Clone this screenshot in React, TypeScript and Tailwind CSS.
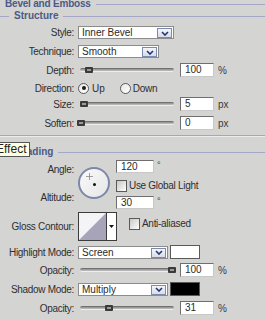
import React from "react";

const font = { fontFamily: '"Liberation Sans", Arial, sans-serif' };

function DropBtn() {
  return (
    <div className="absolute right-[1px] top-[1px] w-[15px] h-[10px] border border-[#7b8bb0] bg-gradient-to-b from-[#f4f6fb] to-[#d6dcea] flex items-center justify-center">
      <svg width="8" height="5" viewBox="0 0 8 5">
        <path d="M1 1 L4 4 L7 1" stroke="#27356a" strokeWidth="1.6" fill="none" />
      </svg>
    </div>
  );
}

function Select({ w, text }: { w: string; text: string }) {
  return (
    <div className={`relative h-[13px] ${w} border border-[#8c8c8c] bg-white`}>
      <span className="absolute left-[3px] top-[0px] leading-[11px] text-[10px] text-[#2b2b2b]">{text}</span>
      <DropBtn />
    </div>
  );
}

function Input({ v }: { v: string }) {
  return (
    <div className="w-[34px] h-[14px] border border-[#6e6e6e] border-r-[#c8c8c8] border-b-[#c8c8c8] bg-white pl-[4px] leading-[12px] text-[10px] text-[#2b2b2b]">
      {v}
    </div>
  );
}

function Slider({ thumb }: { thumb: number }) {
  return (
    <div className="relative w-[94px] h-[8px]">
      <div className="absolute left-0 right-0 top-[2px] h-[4px] rounded-full bg-gradient-to-b from-[#5e5e5e] via-[#9a9a9a] to-[#c4c4c4] border-b border-[#eeeeee]" />
      <div
        className="absolute top-[1px] w-[8px] h-[6px] bg-[#3a3a3a] rounded-[1px] flex items-center justify-center"
        style={{ left: thumb }}
      >
        <div className="w-[4px] h-[2px] bg-[#9a9a9a]" />
      </div>
    </div>
  );
}

function Label({ children, cls = "" }: { children: React.ReactNode; cls?: string }) {
  return (
    <div className={`w-[74px] shrink-0 text-right text-[10px] tracking-[-0.3px] text-[#2f2f2f] ${cls}`}>{children}</div>
  );
}

function SliderRow({ label, thumb, v, unit, mt }: { label: string; thumb: number; v: string; unit: string; mt: string }) {
  return (
    <div className={`flex items-center h-[14px] ${mt}`}>
      <Label>{label}</Label>
      <div className="ml-[6px]">
        <Slider thumb={thumb} />
      </div>
      <div className="ml-[6px]">
        <Input v={v} />
      </div>
      <span className="ml-[4px] text-[10px] text-[#3a3a3a]">{unit}</span>
    </div>
  );
}

function Radio({ on }: { on?: boolean }) {
  return (
    <div className="w-[11px] h-[11px] rounded-full border border-[#5a5a5a] bg-gradient-to-br from-[#e8e8e8] to-white flex items-center justify-center">
      {on && <div className="w-[4px] h-[4px] rounded-full bg-[#1a1a1a]" />}
    </div>
  );
}

function Check() {
  return <div className="w-[11px] h-[12px] border border-[#5a5a5a] bg-gradient-to-br from-[#c8c8c8] to-white" />;
}

export default function App() {
  return (
    <div className="relative w-[265px] h-[320px] overflow-hidden bg-[#d4d4d3]" style={font}>
      {/* Bevel and Emboss heading */}
      <div className="flex items-center h-[9px]">
        <span className="ml-[5px] text-[10px] font-bold leading-[9px] text-[#4b5a86] -mt-[2px] tracking-[-0.2px]">Bevel and Emboss</span>
        <div className="flex-1 ml-[5px] h-px bg-[#a6a6c6]" />
      </div>
      {/* Structure */}
      <div className="flex items-center h-[12px] mt-[1px]">
        <div className="w-[9px] h-px bg-[#a6a6c6]" />
        <span className="ml-[5px] text-[10px] font-bold leading-[12px] text-[#4b5a86]">Structure</span>
        <div className="flex-1 ml-[5px] h-px bg-[#a6a6c6]" />
      </div>
      {/* Style */}
      <div className="flex items-center h-[13px] mt-[4px]">
        <Label>Style:</Label>
        <div className="ml-[4px]">
          <Select w="w-[96px]" text="Inner Bevel" />
        </div>
      </div>
      {/* Technique */}
      <div className="flex items-center h-[13px] mt-[6px]">
        <Label>Technique:</Label>
        <div className="ml-[4px]">
          <Select w="w-[81px]" text="Smooth" />
        </div>
      </div>
      <SliderRow label="Depth:" thumb={5} v="100" unit="%" mt="mt-[5px]" />
      {/* Direction */}
      <div className="flex items-center h-[12px] mt-[5px]">
        <Label>Direction:</Label>
        <div className="ml-[4px]">
          <Radio on />
        </div>
        <span className="ml-[3px] text-[10px] text-[#2f2f2f]">Up</span>
        <div className="ml-[15px]">
          <Radio />
        </div>
        <span className="ml-[2px] text-[10px] text-[#2f2f2f] tracking-[-0.3px]">Down</span>
      </div>
      <SliderRow label="Size:" thumb={0} v="5" unit="px" mt="mt-[3px]" />
      <SliderRow label="Soften:" thumb={-3} v="0" unit="px" mt="mt-[5px]" />
      {/* separator */}
      <div className="mt-[5px] h-px bg-[#a9a9a9]" />
      <div className="h-px bg-[#ececec]" />
      {/* Shading heading */}
      <div className="flex items-center h-[14px] mt-[8px]">
        <span className="ml-[14px] text-[10px] font-bold leading-[12px] text-[#4b5a86]">Shading</span>
        <div className="flex-1 ml-[5px] h-px bg-[#a6a6c6]" />
      </div>
      {/* Angle / Altitude */}
      <div className="flex mt-[1px] h-[48px]">
        <div className="w-[74px] shrink-0 flex flex-col justify-between">
          <Label cls="mt-[2px]">Angle:</Label>
          <Label cls="mb-[3px]">Altitude:</Label>
        </div>
        <div className="ml-[4px] mt-[7px] relative w-[32px] h-[32px] rounded-full border-2 border-[#7b88a8] bg-gradient-to-br from-[#fafafa] to-[#e6e6e6]">
          <div className="absolute left-[13px] top-[14px] w-[3px] h-[3px] rounded-full bg-[#111]" />
          <svg className="absolute left-[6px] top-[4px]" width="7" height="7" viewBox="0 0 7 7">
            <path d="M3.5 0 V7 M0 3.5 H7" stroke="#8a8a8a" strokeWidth="0.8" />
          </svg>
        </div>
        <div className="ml-[6px] flex flex-col">
          <div className="flex items-start">
            <div className="w-[38px] h-[13px] border border-[#6e6e6e] border-r-[#c8c8c8] border-b-[#c8c8c8] bg-white pl-[4px] leading-[11px] text-[10px] text-[#2b2b2b]">120</div>
            <span className="ml-[3px] -mt-[1px] text-[9px] text-[#3a3a3a]">°</span>
          </div>
          <div className="flex items-center mt-[5px]">
            <Check />
            <span className="ml-[2px] text-[10px] tracking-[-0.3px] text-[#2f2f2f]">Use Global Light</span>
          </div>
          <div className="flex items-start mt-[3px]">
            <div className="w-[38px] h-[13px] border border-[#6e6e6e] border-r-[#c8c8c8] border-b-[#c8c8c8] bg-white pl-[4px] leading-[11px] text-[10px] text-[#2b2b2b]">30</div>
            <span className="ml-[3px] -mt-[1px] text-[9px] text-[#3a3a3a]">°</span>
          </div>
        </div>
      </div>
      {/* Gloss Contour */}
      <div className="flex items-center h-[29px] mt-[4px]">
        <Label>Gloss Contour:</Label>
        <div className="ml-[4px] flex h-[29px] border border-[#3c3c3c] bg-white">
          <svg width="27" height="27" viewBox="0 0 27 27">
            <rect width="27" height="27" fill="#f4f4f6" />
            <path d="M0 27 L27 0 L27 27 Z" fill="#a7a3b8" />
          </svg>
          <div className="w-[10px] h-[27px] border-l border-[#3c3c3c] bg-white flex items-center justify-center">
            <svg width="5" height="3" viewBox="0 0 5 3">
              <path d="M0 0 H5 L2.5 3 Z" fill="#111" />
            </svg>
          </div>
        </div>
        <div className="ml-[12px] -mt-[6px] flex items-center">
          <Check />
          <span className="ml-[2px] text-[10px] tracking-[-0.3px] text-[#2f2f2f]">Anti-aliased</span>
        </div>
      </div>
      {/* Highlight Mode */}
      <div className="flex items-center h-[14px] mt-[4px]">
        <Label>Highlight Mode:</Label>
        <div className="ml-[4px]">
          <Select w="w-[90px]" text="Screen" />
        </div>
        <div className="ml-[2px] w-[30px] h-[14px] border border-[#5a5a5a] bg-white" />
      </div>
      <SliderRow label="Opacity:" thumb={88} v="100" unit="%" mt="mt-[4px]" />
      {/* Shadow Mode */}
      <div className="flex items-center h-[14px] mt-[5px]">
        <Label>Shadow Mode:</Label>
        <div className="ml-[4px]">
          <Select w="w-[90px]" text="Multiply" />
        </div>
        <div className="ml-[2px] w-[30px] h-[14px] border border-[#5a5a5a] bg-black" />
      </div>
      <SliderRow label="Opacity:" thumb={25} v="31" unit="%" mt="mt-[5px]" />

      {/* tooltip */}
      <div className="absolute left-[-8px] top-[142px] h-[15px] px-[3px] border border-[#555] bg-[#ffffe1] text-[12px] leading-[13px] text-[#222]">
        Effect
      </div>
    </div>
  );
}
